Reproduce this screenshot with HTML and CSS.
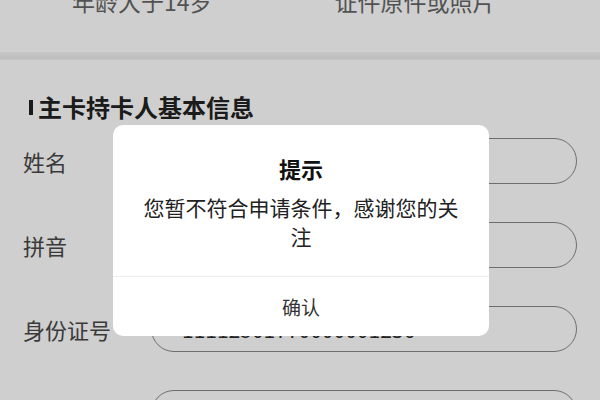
FILE: index.html
```html
<!DOCTYPE html>
<html lang="zh-CN">
<head>
<meta charset="utf-8">
<title>主卡持卡人基本信息</title>
<link rel="stylesheet" href="styles.css">
</head>
<body>
<div class="page">
  <div class="req">
    <div class="req-row">
      <span class="req-item">年龄大于14岁</span>
      <span class="req-item">证件原件或照片</span>
    </div>
  </div>
  <div class="band"></div>
  <div class="form">
    <div class="sec-title"><span class="bar"></span><span>主卡持卡人基本信息</span></div>
    <div class="rows">
      <div class="row"><span class="label">姓名</span><div class="input"></div></div>
      <div class="row"><span class="label">拼音</span><div class="input"></div></div>
      <div class="row"><span class="label">身份证号</span><div class="input"><span class="val">11112501770000001236</span></div></div>
      <div class="row"><span class="label">手机号码</span><div class="input"></div></div>
    </div>
  </div>
  <div class="mask"></div>
  <div class="dialog">
    <div class="dlg-body">
      <div class="dlg-title">提示</div>
      <div class="dlg-msg">您暂不符合申请条件，感谢您的关注</div>
    </div>
    <div class="dlg-btn">确认</div>
  </div>
</div>
</body>
</html>
```
FILE: styles.css
```css
html, body {
  margin: 0;
  padding: 0;
}
body {
  font-family: "Noto Sans CJK SC", "Noto Sans", sans-serif;
  background: #fff;
}
.page {
  position: relative;
  width: 600px;
  height: 400px;
  overflow: hidden;
  background: #fff;
}
.req {
  height: 52px;
  overflow: hidden;
}
.req-row {
  display: flex;
  gap: 122px;
  padding-left: 72px;
  margin-top: -10px;
  font-size: 23px;
  line-height: 23px;
  color: #666;
}
.band {
  height: 8px;
  background: linear-gradient(#f6f6f6, #ebebeb 70%, #f2f2f2);
}
.form {
  padding-top: 35px;
}
.sec-title {
  display: flex;
  align-items: center;
  gap: 5px;
  padding-left: 29px;
  font-size: 24px;
  line-height: 24px;
  font-weight: 700;
  color: #222;
}
.bar {
  width: 4px;
  height: 15px;
  background: #222;
}
.rows {
  display: flex;
  flex-direction: column;
  gap: 38px;
  margin-top: 19px;
}
.row {
  display: flex;
  align-items: center;
  height: 46px;
  padding-left: 23px;
}
.label {
  width: 128px;
  font-size: 22px;
  color: #484848;
}
.input {
  box-sizing: border-box;
  width: 426px;
  height: 46px;
  border: 1.5px solid #888;
  border-radius: 23px;
  display: flex;
  align-items: center;
  padding-left: 30px;
}
.val {
  font-size: 21px;
  color: #2c2c2c;
}
.mask {
  position: absolute;
  inset: 0;
  background: rgba(0, 0, 0, 0.19);
}
.dialog {
  position: absolute;
  left: 113px;
  top: 125px;
  width: 376px;
  background: #fff;
  border-radius: 10px;
  overflow: hidden;
}
.dlg-body {
  padding: 28px 24px 25px;
  text-align: center;
}
.dlg-title {
  font-size: 22px;
  line-height: 30px;
  font-weight: 700;
  color: #111;
}
.dlg-msg {
  margin-top: 10px;
  font-size: 21px;
  line-height: 29px;
  color: #222;
}
.dlg-btn {
  border-top: 1px solid #ececec;
  height: 59px;
  line-height: 59px;
  text-align: center;
  font-size: 19px;
  color: #333;
}
```
